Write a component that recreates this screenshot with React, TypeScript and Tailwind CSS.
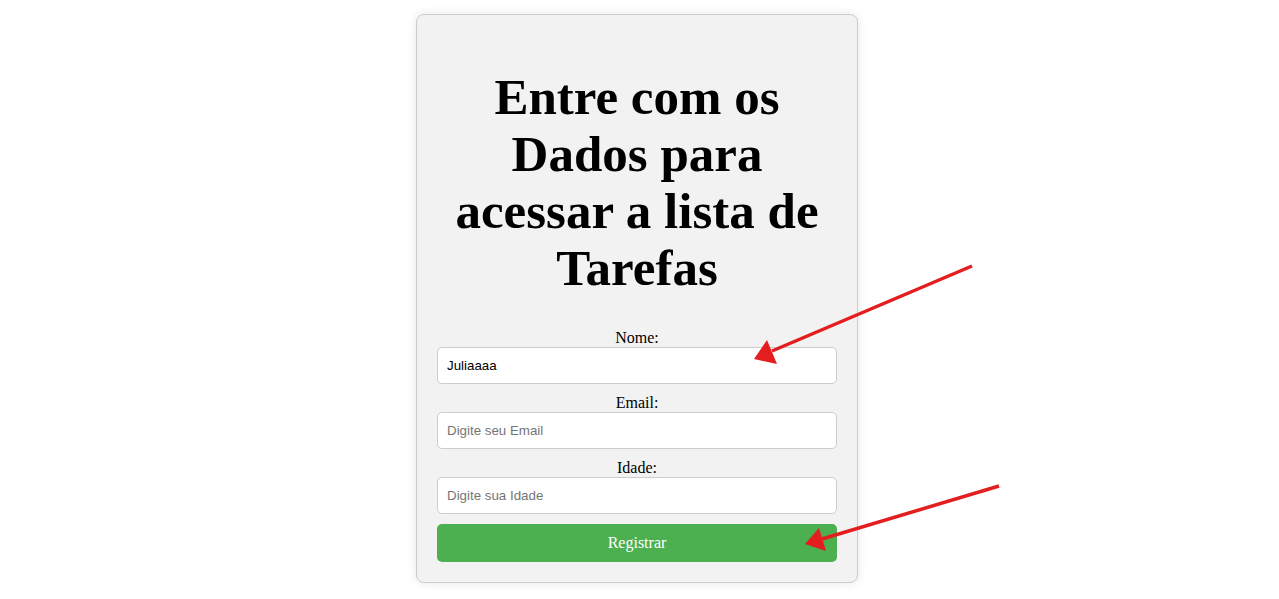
import React from 'react';

const Arrows = () => (
  <svg
    className="pointer-events-none absolute left-0 top-0"
    width={1279}
    height={599}
    viewBox="0 0 1279 599"
  >
    <line x1={972} y1={266} x2={772} y2={351} stroke="#e41e1e" strokeWidth={3.5} />
    <polygon points="754,359 767,340 777,364" fill="#e41e1e" />
    <line x1={999} y1={486} x2={822} y2={539} stroke="#e41e1e" strokeWidth={3.5} />
    <polygon points="805,544 819,528 826,551" fill="#e41e1e" />
  </svg>
);

const Field = ({
  label,
  placeholder,
  value,
}: {
  label: string;
  placeholder: string;
  value?: string;
}) => (
  <>
    <label className="block text-[16px] leading-[18px]">{label}</label>
    <input
      type="text"
      defaultValue={value}
      placeholder={placeholder}
      className="mb-[10px] block h-[37px] w-full rounded-[5px] border border-[#ccc] bg-white px-[9px] text-left font-['Liberation_Sans',Arial,sans-serif] text-[13.33px] text-black outline-none placeholder:text-[#757575]"
    />
  </>
);

export default function App() {
  return (
    <div className="relative min-h-[599px] w-full bg-white font-['Liberation_Serif','Times_New_Roman',serif] text-black">
      <div className="flex justify-center pr-[5px] pt-[14px]">
        <div className="w-[442px] rounded-[8px] border border-[#ccc] bg-[#f2f2f2] p-[20px] text-center shadow-[0_0_10px_rgba(0,0,0,0.1)]">
          <h1 className="mb-[32px] mt-[34px] text-[51px] font-bold leading-[57px]">
            Entre com os Dados para acessar a lista de Tarefas
          </h1>
          <form onSubmit={(e) => e.preventDefault()}>
            <Field label="Nome:" placeholder="Digite seu Nome" value="Juliaaaa" />
            <Field label="Email:" placeholder="Digite seu Email" />
            <Field label="Idade:" placeholder="Digite sua Idade" />
            <button
              type="submit"
              className="block h-[38px] w-full rounded-[5px] bg-[#4caf50] text-[16px] text-white"
            >
              Registrar
            </button>
          </form>
        </div>
      </div>
      <Arrows />
    </div>
  );
}
